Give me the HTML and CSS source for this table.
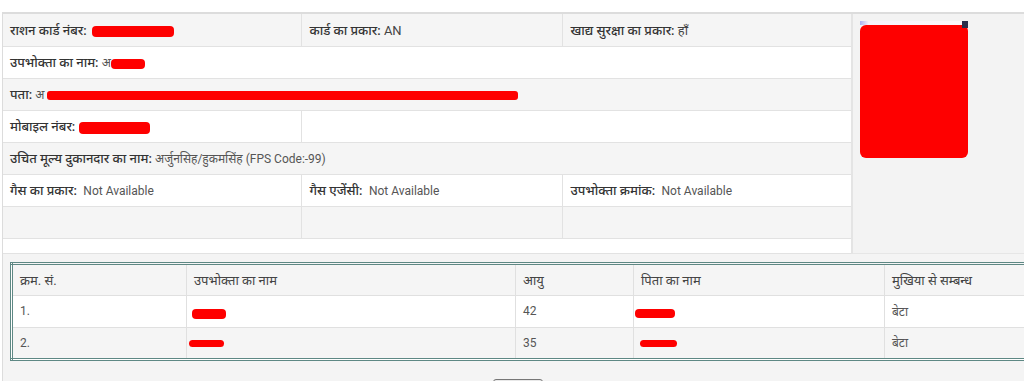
FILE: index.html
```html
<!DOCTYPE html>
<html lang="hi">
<head>
    <meta charset="UTF-8">
    <meta name="viewport" content="width=device-width, initial-scale=1.0">
    <title>राशन कार्ड विवरण</title>
    <link rel="stylesheet" href="styles.css">
</head>
<body>
    <div class="card-panel">
        <table class="info-table">
            <colgroup>
                <col class="w-c1">
                <col class="w-c2">
                <col class="w-c3">
                <col class="w-photo">
            </colgroup>
            <tr class="row-alt">
                <td><span class="lbl">राशन कार्ड नंबर:</span> <span class="mask mask-card"></span></td>
                <td><span class="lbl">कार्ड का प्रकार:</span> <span class="val-plain">AN</span></td>
                <td class="top"><span class="lbl">खाद्य सुरक्षा का प्रकार:</span> <span class="val-plain">हाँ</span></td>
                <td class="photo-cell" rowspan="8">
                    <div class="photo">
                        <span class="photo-strip"></span>
                        <span class="photo-face"></span>
                    </div>
                </td>
            </tr>
            <tr>
                <td colspan="3"><span class="lbl">उपभोक्ता का नाम:</span> <span class="val">अ</span><span class="mask mask-name"></span></td>
            </tr>
            <tr class="row-alt">
                <td colspan="3"><span class="lbl">पता:</span> <span class="val">अ</span><span class="mask mask-address"></span></td>
            </tr>
            <tr>
                <td><span class="lbl">मोबाइल नंबर:</span> <span class="mask mask-mobile"></span></td>
                <td colspan="2"></td>
            </tr>
            <tr class="row-alt">
                <td colspan="3"><span class="lbl">उचित मूल्य दुकानदार का नाम:</span> <span class="val">अर्जुनसिह/हुकमसिंह (FPS Code:-99)</span></td>
            </tr>
            <tr>
                <td><span class="lbl">गैस का प्रकार:</span>&nbsp; <span class="val">Not Available</span></td>
                <td><span class="lbl">गैस एजेंसी:</span>&nbsp; <span class="val">Not Available</span></td>
                <td><span class="lbl">उपभोक्ता क्रमांक:</span>&nbsp; <span class="val">Not Available</span></td>
            </tr>
            <tr class="row-alt">
                <td></td>
                <td></td>
                <td></td>
            </tr>
            <tr class="row-thin">
                <td colspan="3"></td>
            </tr>
        </table>

        <div class="members-wrap">
            <table class="members">
                <colgroup>
                    <col class="m-c1">
                    <col class="m-c2">
                    <col class="m-c3">
                    <col class="m-c4">
                    <col class="m-c5">
                </colgroup>
                <tr class="row-alt">
                    <th>क्रम. सं.</th>
                    <th>उपभोक्ता का नाम</th>
                    <th>आयु</th>
                    <th>पिता का नाम</th>
                    <th>मुखिया से सम्बन्ध</th>
                </tr>
                <tr>
                    <td>1.</td>
                    <td><span class="mask mask-m1"></span></td>
                    <td>42</td>
                    <td><span class="mask mask-f1"></span></td>
                    <td>बेटा</td>
                </tr>
                <tr class="row-alt">
                    <td>2.</td>
                    <td><span class="mask mask-m2"></span></td>
                    <td>35</td>
                    <td><span class="mask mask-f2"></span></td>
                    <td>बेटा</td>
                </tr>
            </table>
        </div>

        <div class="actions">
            <button class="btn-back" type="button" aria-label="वापस"></button>
        </div>
    </div>
</body>
</html>
```

FILE: styles.css
```css
* {
    margin: 0;
    padding: 0;
    box-sizing: border-box;
}

html, body {
    overflow: hidden;
}

body {
    font-family: Roboto, "Noto Sans", sans-serif;
    font-size: 13px;
    color: #555;
    background: #fff;
    padding-top: 12px;
}

/* outer panel */
.card-panel {
    margin-left: 2px;
    background: #f4f4f4;
    border-top: 2px solid #dcdcdc;
    border-left: 1px solid #dcdcdc;
    height: 400px;
}

/* ration card info grid */
.info-table {
    width: 100%;
    table-layout: fixed;
    border-collapse: collapse;
    background: #fff;
}

.w-c1 { width: 298px; }
.w-c2 { width: 261px; }
.w-c3 { width: 290px; }

.info-table td {
    height: 32px;
    padding: 0 8px;
    border: 1px solid #e2e2e2;
    border-top: none;
    vertical-align: middle;
    white-space: nowrap;
}

.info-table tr:first-child td {
    border-top: none;
}

.info-table td:first-child {
    border-left: none;
    padding-left: 7px;
}

.info-table td.top {
    vertical-align: top;
    padding-top: 7px;
}

.info-table .row-thin td {
    height: 15px;
}

.row-alt td,
.row-alt th {
    background: #f5f5f5;
}

.lbl {
    color: #333;
    font-weight: 500;
}

.val {
    color: #555;
    font-size: 12px;
}

.val-plain {
    color: #444;
}

/* photo column */
.info-table td.photo-cell {
    background: #f3f3f3;
    vertical-align: top;
    padding: 7px 0 0 7px;
    border-left: 2px solid #e4e4e4;
    border-right: none;
    border-bottom: 1px solid #e6e6e6;
}

.photo {
    width: 108px;
    height: 137px;
    display: flex;
    flex-direction: column;
    position: relative;
}

.photo-strip {
    height: 4px;
    background: linear-gradient(90deg, #aab2f2, #f6f3fa 8%, #fbf8fb 90%);
}

.photo-strip::after {
    content: "";
    position: absolute;
    top: 0;
    right: 0;
    width: 6px;
    height: 7px;
    background: #2b2d4a;
}

.photo-face {
    flex: 1;
    background: #fe0000;
    border-radius: 6px;
}

/* redaction marks */
.mask {
    display: inline-block;
    background: #fe0000;
    border-radius: 4px;
    vertical-align: middle;
}

.mask-card { width: 82px; height: 11px; margin-left: 2px; }
.mask-name { width: 34px; height: 10px; margin-left: 0; }
.mask-address { width: 471px; height: 9px; margin-left: 2px; border-radius: 3px; }
.mask-mobile { width: 71px; height: 12px; }
.mask-m1 { width: 34px; height: 10px; margin-left: -2px; margin-top: 6px; }
.mask-m2 { width: 35px; height: 7px; margin-left: -5px; }
.mask-f1 { width: 40px; height: 9px; margin-left: -6px; margin-top: 4px; }
.mask-f2 { width: 37px; height: 7px; margin-left: -1px; }

/* family members list */
.members-wrap {
    overflow: hidden;
    padding: 8px 0 0 7px;
}

.members {
    width: 1030px;
    table-layout: fixed;
    border-collapse: collapse;
    border: 3px double #5e8884;
    background: #fff;
}

.m-c1 { width: 175px; }
.m-c2 { width: 329px; }
.m-c3 { width: 118px; }
.m-c4 { width: 251px; }

.members th,
.members td {
    height: 32px;
    padding: 0 7px;
    text-align: left;
    font-weight: normal;
    border: 1px solid #e0e0e0;
    vertical-align: middle;
    white-space: nowrap;
}

.members th {
    color: #444;
    font-size: 13px;
}

.members td {
    color: #555;
    font-size: 12px;
}

.actions {
    padding: 18px 0 0 8px;
    text-align: center;
}

.btn-back {
    width: 50px;
    height: 30px;
    border: 1px solid #777;
    border-radius: 3px;
    background: #e8e8e8;
}
```
